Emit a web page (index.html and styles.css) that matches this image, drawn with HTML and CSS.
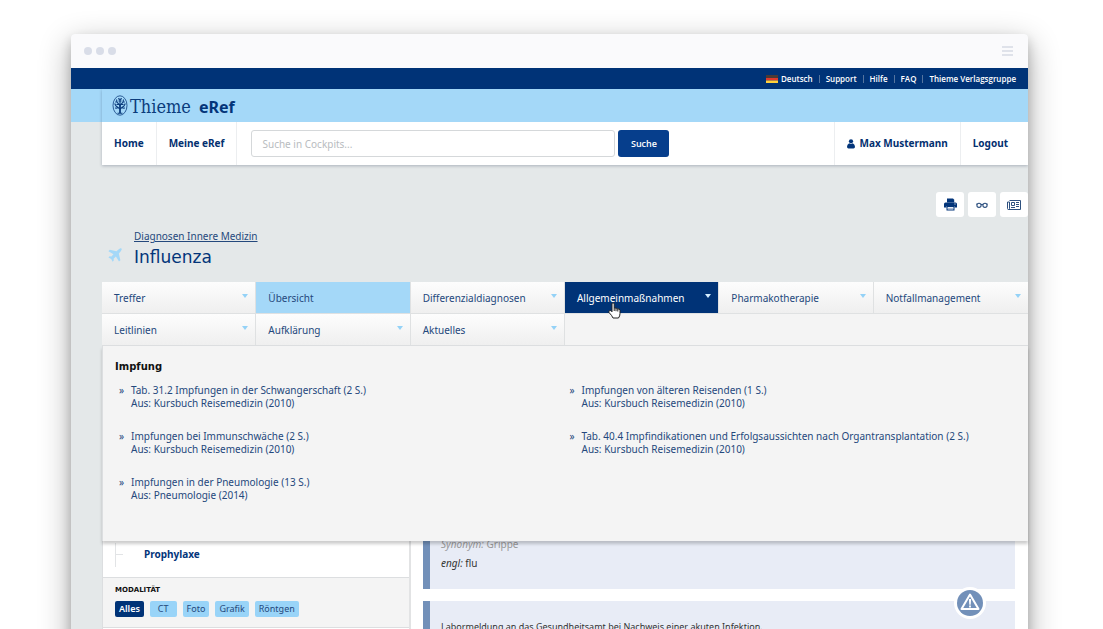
FILE: index.html
```html
<!DOCTYPE html>
<html lang="de">
<head>
<meta charset="utf-8">
<meta name="viewport" content="width=device-width, initial-scale=1">
<title>Influenza – Thieme eRef</title>
<link rel="stylesheet" href="styles.css">
</head>
<body>
<div class="stage">
<div class="window">
  <div class="chrome">
    <div class="dots"><span></span><span></span><span></span></div>
    <div class="burger"><span></span><span></span><span></span></div>
  </div>
  <div class="metabar">
    <a href="#"><svg class="flag" viewBox="0 0 12 8"><path fill="#4a3a36" d="M0 0h12v3H0z"/><path fill="#e0392c" d="M0 3h12v2.500H0z"/><path fill="#ffd23c" d="M0 5.500h12V8H0z"/></svg>Deutsch</a>
    <a href="#">Support</a>
    <a href="#">Hilfe</a>
    <a href="#">FAQ</a>
    <a href="#">Thieme Verlagsgruppe</a>
  </div>
  <div class="body">
    <header class="header">
      <a class="brand" href="#">
        <svg class="emblem" viewBox="0 0 16 21" fill="none" stroke="#0b3c7c">
          <ellipse cx="8" cy="10.500" rx="7" ry="9.700" stroke-width=".8"/>
          <path stroke-width="1.800" d="M8 9v9"/>
          <path stroke-width="1.100" d="M5.500 18.300h5M8 14 4 11M8 14l4-3M8 10.500 5 7M8 10.500l3-3.500M8 9V3.500M4 11 2.700 8.500M12 11l1.300-2.500M3 13l2.500.3M13 13l-2.500.3M5 7 4.500 4.500M11 7l.5-2.500M5 7H3.200M11 7h1.800M6.400 3.300l1 1.500M9.600 3.300l-1 1.500M6 10V8.500M10 10V8.500M4.500 9.500h1M10.500 9.500h1M6.500 6h3"/>
        </svg>
        <span class="brand-name">Thieme</span><span class="brand-product">eRef</span>
      </a>
      <div class="mainnav">
        <a class="navlink" href="#">Home</a>
        <a class="navlink" href="#">Meine eRef</a>
        <form class="search">
          <input type="search" aria-label="Suche in Cockpits" placeholder="Suche in Cockpits...">
          <button type="button">Suche</button>
        </form>
        <a class="navlink user" href="#"><svg viewBox="0 0 8 10" fill="#03357a"><circle cx="4" cy="2.300" r="2.100"/><path d="M2.200 4.300Q4 5.700 5.800 4.300Q8 5.300 8 7.800Q8 9.600 6.500 9.600h-5Q0 9.600 0 7.800Q0 5.300 2.200 4.300z"/></svg>Max Mustermann</a>
        <a class="navlink" href="#">Logout</a>
      </div>
    </header>

    <div class="tools">
      <button type="button" aria-label="Drucken"><svg width="13" height="13" viewBox="0 0 13 13" fill="#03357a"><path d="M3 .5h6l1.200 1.200V4.500H3z"/><path fill-rule="evenodd" d="M1.500 4.500h10Q13 4.500 13 6v3.500h-2.500V8h-8v1.500H0V6Q0 4.500 1.500 4.500z"/><path fill="#fff" d="M10.500 5.500h1v1h-1z"/><path fill-rule="evenodd" d="M2.500 8h8v4.500h-8zM3.600 9v2.500h5.800V9z"/><path fill="#8da2c4" d="M3.600 9.800h5.800v.9H3.600z"/></svg></button>
      <button type="button" aria-label="Lesemodus"><svg width="12" height="8" viewBox="0 0 12 8" fill="none" stroke="#2d507f" stroke-width="1.100"><circle cx="3" cy="4.300" r="2.100"/><circle cx="9" cy="4.300" r="2.100"/><path d="M5 3.700q1-.7 2 0M.3 3.300 1.200 3M11.700 3.300 10.800 3"/></svg></button>
      <button type="button" aria-label="Nachrichten"><svg width="14" height="10" viewBox="0 0 14 10" fill="none" stroke="#2d507f"><path d="M2.500.5h11v9H1.500q-1 0-1-1V2h2M2.500 2v6.500q0 1-1 1"/><path d="M4.500 2.500h3v3h-3zM9 2.500h3M9 4.500h3M9 6.500h3M4 7.500h4"/></svg></button>
    </div>

    <div class="heading">
      <svg class="plane" viewBox="0 0 14 14" fill="#a4d8f8"><path d="M12.400.3Q14 0 13.700 1.600Q13.400 3 10.800 5.600L12.400 12.200L11 13.600L7.900 8.600L5.600 10.700L5.800 12.400L4.600 13.700L3.200 10.900L.4 9.500L1.700 8.300L3.400 8.500L5.500 6.200L.4 3.200L1.800 1.700L8.500 3.300Q11.100.7 12.400.3z"/></svg>
      <div>
        <a class="crumb" href="#">Diagnosen Innere Medizin</a>
        <h1>Influenza</h1>
      </div>
    </div>

    <nav class="tabs">
      <a class="tab drop" href="#">Treffer</a>
      <a class="tab current" href="#">Übersicht</a>
      <a class="tab drop" href="#">Differenzialdiagnosen</a>
      <a class="tab drop open" href="#">Allgemeinmaßnahmen<svg class="hand" viewBox="0 0 13 17"><path fill="#fff" stroke="#222" d="M4 9V2Q4 .8 5 .8T6.200 2v4Q7 5.400 7.900 6.400Q8.900 5.900 9.700 6.900Q11.800 6.500 12 8.500v3Q12 14 10.500 16h-5.500Q4 13.500 1 10.500Q.5 9 1.800 8.500Q3 8.200 4 9.800zM6.200 6v3M8 6.500v2.700M9.800 7v2.500"/></svg></a>
      <a class="tab drop" href="#">Pharmakotherapie</a>
      <a class="tab drop" href="#">Notfallmanagement</a>
      <a class="tab drop" href="#">Leitlinien</a>
      <a class="tab drop" href="#">Aufklärung</a>
      <a class="tab drop" href="#">Aktuelles</a>
    </nav>

    <section class="menu">
      <h2>Impfung</h2>
      <div class="entries">
        <a href="#">Tab. 31.2 Impfungen in der Schwangerschaft (2 S.)<br>Aus: Kursbuch Reisemedizin (2010)</a>
        <a href="#">Impfungen von älteren Reisenden (1 S.)<br>Aus: Kursbuch Reisemedizin (2010)</a>
        <a href="#">Impfungen bei Immunschwäche (2 S.)<br>Aus: Kursbuch Reisemedizin (2010)</a>
        <a href="#">Tab. 40.4 Impfindikationen und Erfolgsaussichten nach Organtransplantation (2 S.)<br>Aus: Kursbuch Reisemedizin (2010)</a>
        <a href="#">Impfungen in der Pneumologie (13 S.)<br>Aus: Pneumologie (2014)</a>
      </div>
    </section>

    <div class="content">
      <aside class="sidebar">
        <div class="tree"><a href="#">Prophylaxe</a></div>
        <div class="filter">
          <h3>MODALITÄT</h3>
          <div class="chips">
            <button type="button" class="active">Alles</button>
            <button type="button">CT</button>
            <button type="button">Foto</button>
            <button type="button">Grafik</button>
            <button type="button">Röntgen</button>
          </div>
        </div>
      </aside>
      <main class="article">
        <div class="note first"><p class="faded"><i>Synonym:</i> Grippe</p><p><i>engl:</i> flu</p></div>
        <div class="note second">
          <p>Labormeldung an das Gesundheitsamt bei Nachweis einer akuten Infektion.</p>
          <svg class="warn" viewBox="0 0 32 32"><circle cx="16" cy="16" r="16" fill="#fff"/><circle cx="16" cy="16" r="13" fill="#7290b9"/><path fill="none" stroke="#fff" stroke-width="2" stroke-linejoin="round" d="M16 7.500 24.500 22h-17z"/><path fill="#fff" d="M14.900 12h2.200l-.4 5.800h-1.400zM15.100 18.600h1.800v1.800h-1.800z"/></svg>
        </div>
      </main>
    </div>
  </div>
</div>
</div>
</body>
</html>
```
FILE: styles.css
```css
* { box-sizing: border-box; }
body {
  margin: 0;
  background: #fff;
  color: #333;
  font: 10px/13px "Noto Sans", Verdana, sans-serif;
}
a { color: #24487c; text-decoration: none; }
h1, h2, h3, p { margin: 0; }
button { font: inherit; border: 0; padding: 0; cursor: pointer; }
svg { display: block; flex: none; }

.stage { height: 100vh; overflow: hidden; padding: 34px 75px 0 71px; }
.window {
  min-height: 100%;
  background: #e4e8e9;
  border-radius: 4px 4px 0 0;
  box-shadow: 0 10px 32px rgba(0, 0, 0, .32), 0 6px 12px rgba(0, 0, 0, .2);
}

.chrome {
  display: flex;
  align-items: center;
  justify-content: space-between;
  height: 34px;
  padding: 0 15px 0 13px;
  background: #fafafc;
  border-radius: 4px 4px 0 0;
}
.dots { display: flex; gap: 4px; }
.dots span { width: 8px; height: 8px; border-radius: 50%; background: #d9dde8; }
.burger { display: grid; gap: 2px; }
.burger span { width: 11px; height: 2px; background: #dfe2ea; }

.metabar {
  display: flex;
  align-items: center;
  justify-content: flex-end;
  height: 21px;
  padding-right: 12px;
  background: #003377;
  font: 600 8px/12px "Open Sans", "Noto Sans", sans-serif;
}
.metabar a { display: flex; align-items: center; color: #fff; }
.metabar a + a::before { content: ""; width: 1px; height: 8px; margin: 0 6px; background: #54749f; }
.flag { width: 12px; height: 8px; margin-right: 3px; }

.body { padding-left: 31px; background: linear-gradient(#a4d8f8 33px, transparent 33px); }

.header { background: #fff; box-shadow: 0 1px 3px rgba(0, 20, 50, .25); clip-path: inset(0 0 -5px -5px); }
.brand {
  display: flex;
  align-items: center;
  height: 33px;
  padding-left: 10px;
  background: #a4d8f8;
  color: #0b3c7c;
}
.emblem { width: 16px; height: 21px; margin-right: 2px; }
.brand-name { padding-top: 2px; font: 18px/24px "DejaVu Serif Condensed", "DejaVu Serif", serif; }
.brand-product { margin-left: 8px; padding-top: 2px; color: #03357a; font: 700 16px/24px "Noto Sans", sans-serif; }
.mainnav { display: flex; height: 43px; }
.navlink {
  display: flex;
  align-items: center;
  padding: 0 12px;
  border-right: 1px solid #eceef0;
  color: #03306f;
  font-weight: 700;
}
.navlink:last-child { padding-right: 20px; border: 0; }
.user { border-left: 1px solid #eceef0; }
.user svg { width: 8px; height: 10px; margin-right: 4px; }
.search { display: flex; flex: 1; align-items: center; gap: 3px; padding-left: 14px; }
.search input {
  width: 364px;
  height: 27px;
  padding: 0 10px;
  border: 1px solid #d5d8da;
  border-radius: 3px;
  background: #fff;
  font: inherit;
}
.search input::placeholder { color: #b8bcc0; }
.search button {
  width: 51px;
  height: 27px;
  border-radius: 3px;
  background: #063e8c;
  color: #fff;
  font: 600 9px/14px "Open Sans", sans-serif;
}

.tools { display: flex; justify-content: flex-end; gap: 4px; padding-top: 27px; }
.tools button {
  display: grid;
  place-items: center;
  width: 28px;
  height: 25px;
  border-radius: 3px;
  background: #fff;
}

.heading { display: flex; align-items: flex-end; gap: 12px; padding: 13px 0 13px 6px; }
.plane { width: 14px; height: 14px; margin-bottom: 7px; }
.crumb { display: block; text-decoration: underline; }
h1 { padding-top: 2px; color: #03357a; font: 17px/24px "DejaVu Sans", sans-serif; }

.tabs {
  display: grid;
  grid-template-columns: repeat(6, 1fr);
  background: #f4f4f4;
  border-bottom: 1px solid #dcdee0;
}
.tab {
  position: relative;
  display: flex;
  align-items: center;
  justify-content: space-between;
  height: 31px;
  padding: 0 7px 0 12px;
  border-right: 1px solid #dfe1e2;
  background: linear-gradient(#fdfdfd, #efefef);
  line-height: 14px;
}
.tab:nth-child(-n+6) { height: 32px; border-bottom: 1px solid #dfe1e2; }
.tab:nth-child(6) { border-right: 0; }
.drop::after {
  content: "";
  margin-bottom: 4px;
  border: 3px solid transparent;
  border-top: 4px solid #94d2f7;
  border-bottom: 0;
}
.tab.current { background: #a4d8f8; }
.tab.open { background: #003377; color: #fff; }
.tab.open::after { border-top-color: #d5eeff; }
.hand { position: absolute; left: 43px; top: 20px; z-index: 3; width: 13px; height: 17px; }

.menu {
  position: relative;
  z-index: 2;
  height: 195px;
  padding: 14px 12px;
  background: #f4f4f4;
  border-left: 1px solid #dcdee0;
  box-shadow: 0 3px 3px rgba(0, 0, 0, .2);
}
.menu h2 { color: #111; font: 700 10px/14px "DejaVu Sans", sans-serif; }
.entries { display: grid; grid-template-columns: 1fr 1fr; gap: 20px 0; padding-top: 10px; }
.entries a { position: relative; padding-left: 16px; white-space: nowrap; }
.entries a::before { content: "»"; position: absolute; left: 4px; }

.content { display: flex; background: #fff; }
.sidebar { width: 309px; border-left: 1px solid #dcdee0; border-right: 2px solid #e2e3e4; }
.tree { height: 36px; padding: 7px 0 0 12px; }
.tree a { display: flex; align-items: center; color: #03357a; font-weight: 700; }
.tree a::before {
  content: "";
  width: 7px;
  height: 24px;
  margin: -6px 21px -6px 0;
  border-left: 1px solid #e2e4e6;
  background: linear-gradient(#e2e4e6, #e2e4e6) center / 100% 1px no-repeat;
}
.filter {
  padding: 7px 12px 10px;
  border: 1px solid #dcdee0;
  border-width: 1px 0;
  background: #f4f4f4;
}
.filter h3 { color: #111; font: 700 7px/10px "DejaVu Sans", sans-serif; }
.chips { display: flex; gap: 6px; padding-top: 6px; }
.chips button {
  height: 16px;
  padding: 0 4px;
  border-radius: 2px;
  background: #99d4f8;
  color: #24487c;
  font: 9px/16px "Noto Sans", sans-serif;
}
.chips button:nth-child(2) { padding: 0 8px; }
.chips .active { background: #003377; color: #fff; font-weight: 600; }

.article { flex: 1; display: grid; gap: 12px; padding: 0 13px 0 12px; }
.note {
  position: relative;
  padding-left: 11px;
  border-left: 7px solid #7290b9;
  background: #e8ecf6;
}
.first { height: 48px; }
.first p { margin-bottom: 6px; }
.first .faded { margin-top: -3px; color: #999; }
.second { height: 60px; padding-top: 19px; font-size: 9px; }
.warn { position: absolute; right: 29px; top: -14px; width: 32px; height: 32px; }
```
